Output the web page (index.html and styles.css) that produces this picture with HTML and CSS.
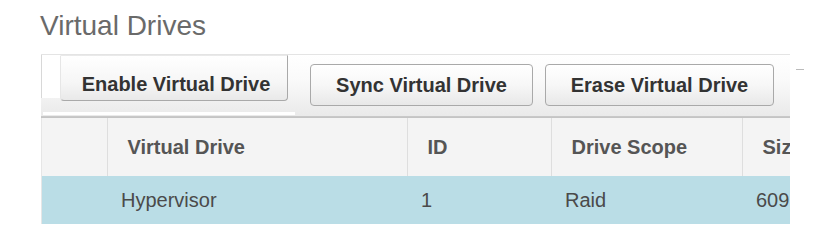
FILE: index.html
```html
<!DOCTYPE html>
<html lang="en">
<head>
  <meta charset="UTF-8" />
  <title>Virtual Drives</title>
  <link rel="stylesheet" href="styles.css">
</head>
<body>

  <div class="page">
    <h1>Virtual Drives</h1>

    <div class="toolbar">
      <div class="buttons">
        <div class="edge"></div>
        <button class="btn btn-cut">Enable Virtual Drive</button>
        <button class="btn btn-sync">Sync Virtual Drive</button>
        <button class="btn btn-erase">Erase Virtual Drive</button>
        <div class="dash"></div>
      </div>
      <div class="track"><div class="thumb"></div></div>
    </div>

    <div class="grid-wrap">
      <table class="grid">
        <colgroup>
          <col style="width: 66px">
          <col style="width: 300px">
          <col style="width: 144px">
          <col style="width: 191px">
          <col style="width: 160px">
        </colgroup>
        <thead>
          <tr>
            <th></th>
            <th>Virtual Drive</th>
            <th>ID</th>
            <th>Drive Scope</th>
            <th>Size</th>
          </tr>
        </thead>
        <tbody>
          <tr class="selected">
            <td></td>
            <td>Hypervisor</td>
            <td>1</td>
            <td>Raid</td>
            <td>609 GB</td>
          </tr>
        </tbody>
      </table>
    </div>
  </div>

</body>
</html>
```

FILE: styles.css
```css
:root {
  --text-color: #444;
  --head-bg: #f4f4f4;
  --line-color: #dedede;
  --selected-bg: #badde6;
  --font-main: 'Liberation Sans', Arial, sans-serif;
}

body {
  margin: 0;
  background: #fff;
  font-family: var(--font-main);
  color: var(--text-color);
}

.page {
  padding: 10px 0 0 41px;
}

h1 {
  margin: 0 0 12px -1px;
  font-size: 28px;
  line-height: 32px;
  font-weight: normal;
  color: #6a6a6a;
}

/* toolbar */
.toolbar {
  width: 749px;
  height: 64px;
  box-sizing: border-box;
  display: flex;
  flex-direction: column;
  border-top: 1px solid #e4e4e4;
  border-bottom: 1px solid #c4c4c4;
  background: linear-gradient(#fff, #fafafa 40%, #e9e9e9);
}

.buttons {
  display: flex;
  align-items: flex-start;
  height: 56px;
}

.buttons > * {
  flex-shrink: 0;
}

.edge {
  width: 18px;
  height: 43px;
  border-left: 1px solid #d8d8d8;
  background: #fff;
}

.btn {
  font-family: var(--font-main);
  font-size: 20px;
  font-weight: bold;
  color: #333;
  border: 1px solid #a9a9a9;
  border-radius: 4px;
  background: linear-gradient(#fff, #f7f7f7 50%, #e8e8e8);
  box-sizing: border-box;
  padding: 0;
  cursor: pointer;
}

.btn-cut {
  width: 228px;
  height: 46px;
  padding: 12px 0 0 4px;
  border-top-color: transparent;
  border-left-color: #e6e6e6;
  border-radius: 0 0 4px 4px;
  background: linear-gradient(#fff, #f6f6f6 60%, #e9e9e9);
}

.btn-sync {
  width: 223px;
  height: 42px;
  margin: 9px 0 0 22px;
}

.btn-erase {
  width: 229px;
  height: 42px;
  margin: 9px 0 0 12px;
}

.dash {
  width: 8px;
  height: 1px;
  margin: 14px 0 0 22px;
  background: #bbb;
}

.track {
  height: 4px;
  margin-top: 2px;
  border-bottom: 1px solid #c8c8c8;
}

.thumb {
  width: 252px;
  height: 3px;
  margin-left: 2px;
  background: #fff;
}

/* grid */
.grid-wrap {
  width: 749px;
  overflow: hidden;
  border-left: 1px solid #e6e6e6;
  box-sizing: border-box;
}

.grid {
  border-collapse: collapse;
  table-layout: fixed;
  width: 861px;
  margin-left: -1px;
}

.grid th {
  height: 58px;
  padding: 0 0 0 20px;
  text-align: left;
  font-size: 20px;
  font-weight: bold;
  color: #555;
  background: var(--head-bg);
  border-left: 1px solid var(--line-color);
  white-space: nowrap;
}

.grid th:first-child {
  border-left: none;
}

.grid td {
  height: 48px;
  padding: 0 0 0 14px;
  font-size: 20px;
  color: #4a4a4a;
  white-space: nowrap;
}

.grid tr.selected td {
  background: var(--selected-bg);
}
```
